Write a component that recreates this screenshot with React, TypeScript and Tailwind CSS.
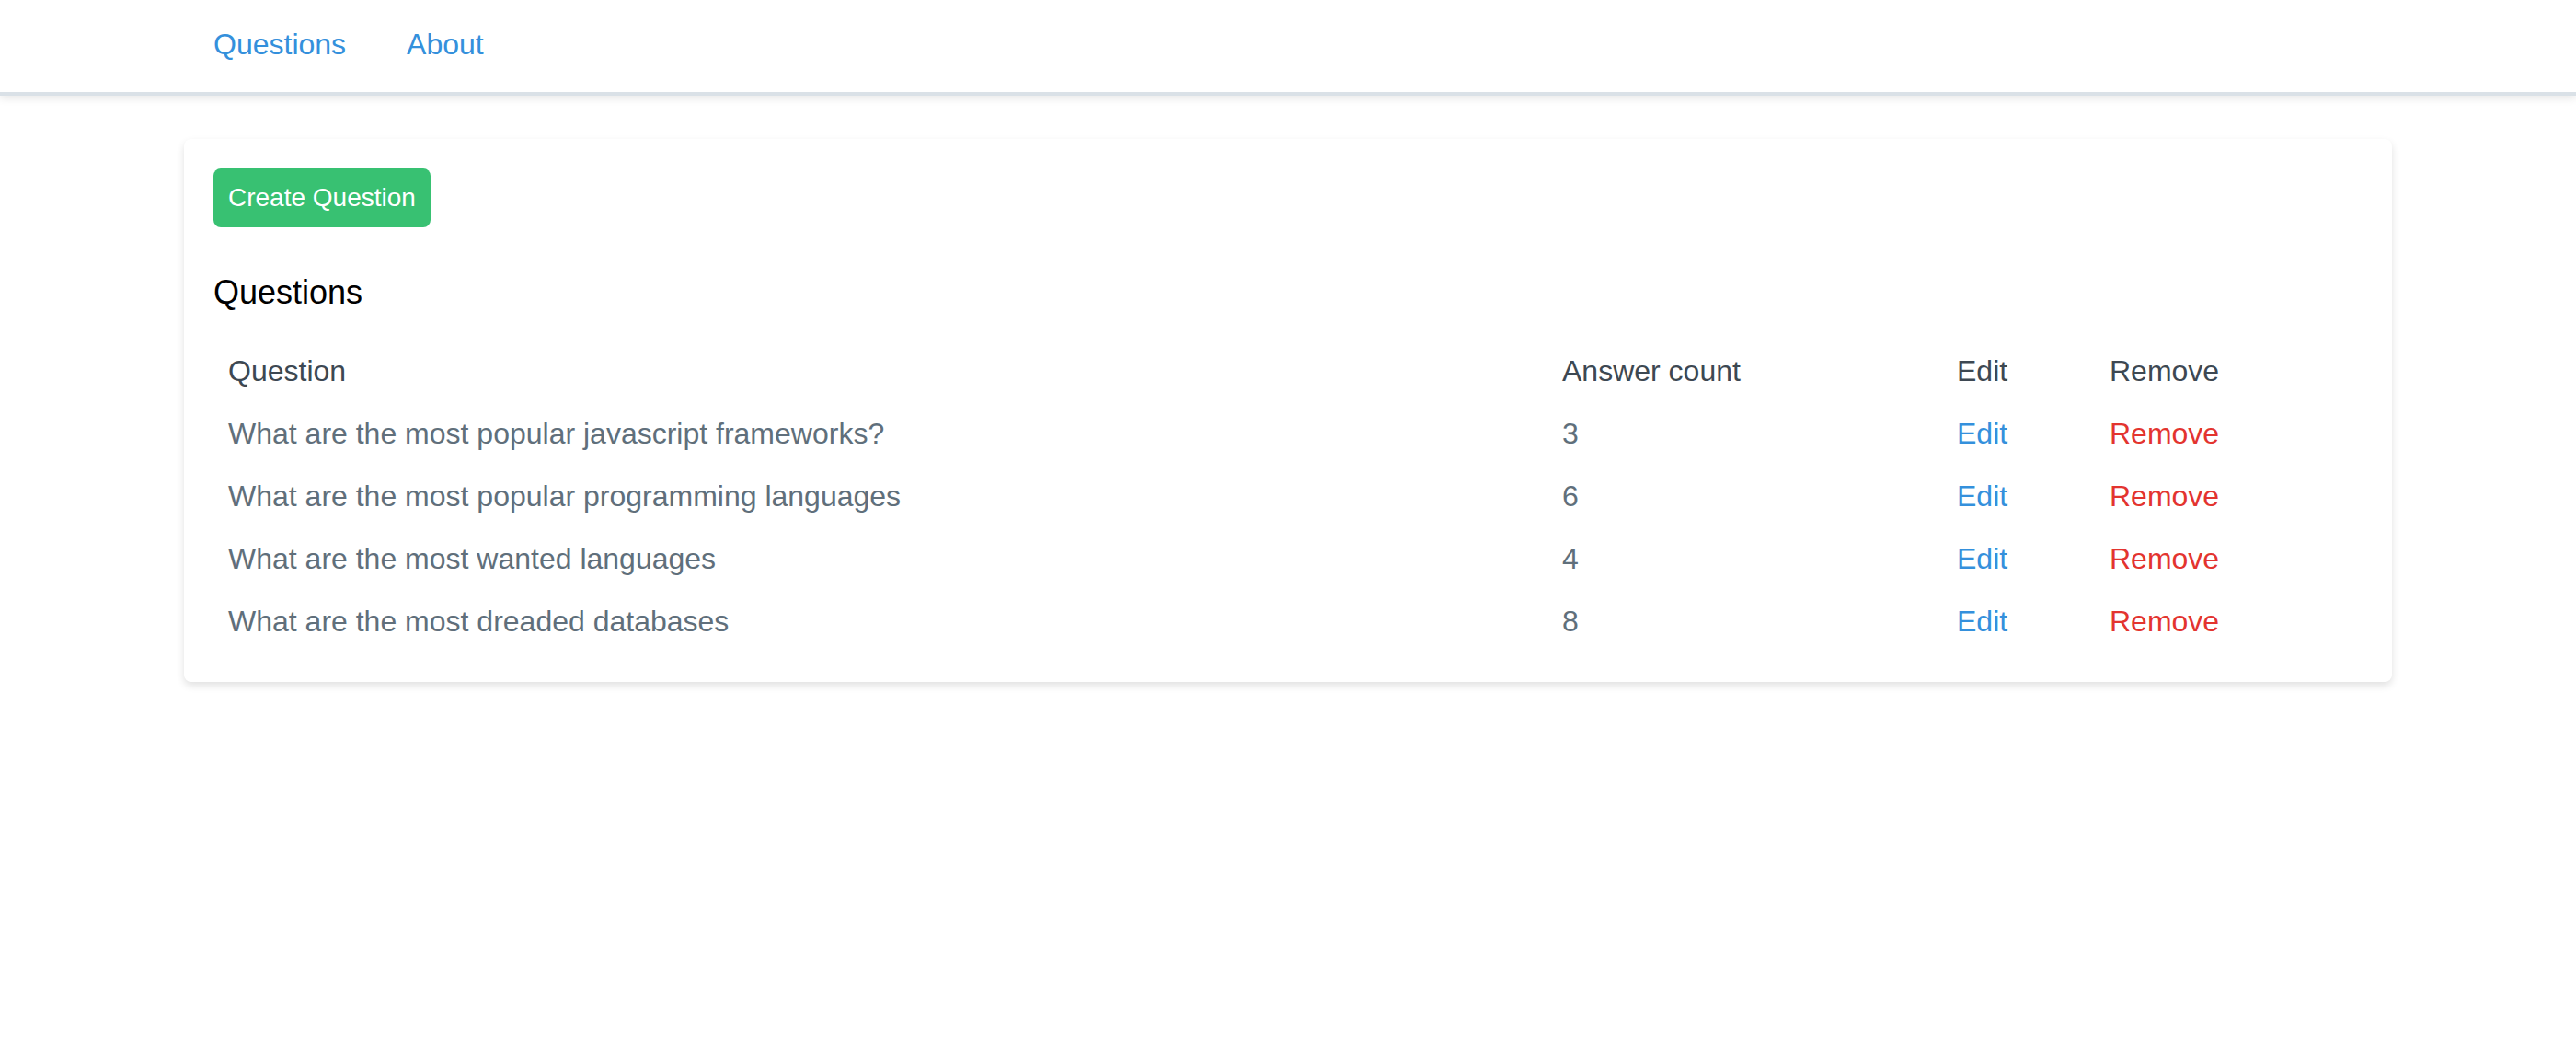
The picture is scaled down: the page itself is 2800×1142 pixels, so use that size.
import React from "react";

const questions = [
  { text: "What are the most popular javascript frameworks?", count: 3 },
  { text: "What are the most popular programming languages", count: 6 },
  { text: "What are the most wanted languages", count: 4 },
  { text: "What are the most dreaded databases", count: 8 },
];

const App = () => {
  return (
    <div
      className="min-h-screen bg-white"
      style={{ fontFamily: '"Liberation Sans", Arial, Helvetica, sans-serif' }}
    >
      <nav className="bg-white border-b-4 border-[#dae1e7] shadow-[0_4px_8px_0_rgba(0,0,0,0.08)]">
        <div className="w-[2400px] mx-auto h-[100px] pb-[4px] px-8 flex items-center gap-[66px] text-[32px] leading-[36px] text-[#3490dc]">
          <a href="#">Questions</a>
          <a href="#">About</a>
        </div>
      </nav>

      <div className="w-[2400px] mx-auto mt-[47px] bg-white rounded-lg shadow-[0_4px_8px_0_rgba(0,0,0,0.12)] p-8">
        <button className="h-16 px-4 rounded-lg bg-[#38c172] text-white text-[28px] leading-[32px]">
          Create Question
        </button>

        <h2 className="mt-[51px] text-[36px] leading-[40px] text-black">
          Questions
        </h2>

        <table className="mt-[31px] w-full table-fixed text-[32px] leading-[36px] text-left">
          <thead>
            <tr className="text-[#3d4852]">
              <th className="w-[1450px] px-4 py-4 font-normal">Question</th>
              <th className="w-[429px] px-4 py-4 font-normal">Answer count</th>
              <th className="w-[166px] px-4 py-4 font-normal">Edit</th>
              <th className="px-4 py-4 font-normal">Remove</th>
            </tr>
          </thead>
          <tbody className="text-[#606f7b]">
            {questions.map((q) => (
              <tr key={q.text}>
                <td className="px-4 py-4">{q.text}</td>
                <td className="px-4 py-4">{q.count}</td>
                <td className="px-4 py-4">
                  <a href="#" className="text-[#3490dc]">
                    Edit
                  </a>
                </td>
                <td className="px-4 py-4">
                  <a href="#" className="text-[#e3342f]">
                    Remove
                  </a>
                </td>
              </tr>
            ))}
          </tbody>
        </table>
      </div>
    </div>
  );
};

export default App;
